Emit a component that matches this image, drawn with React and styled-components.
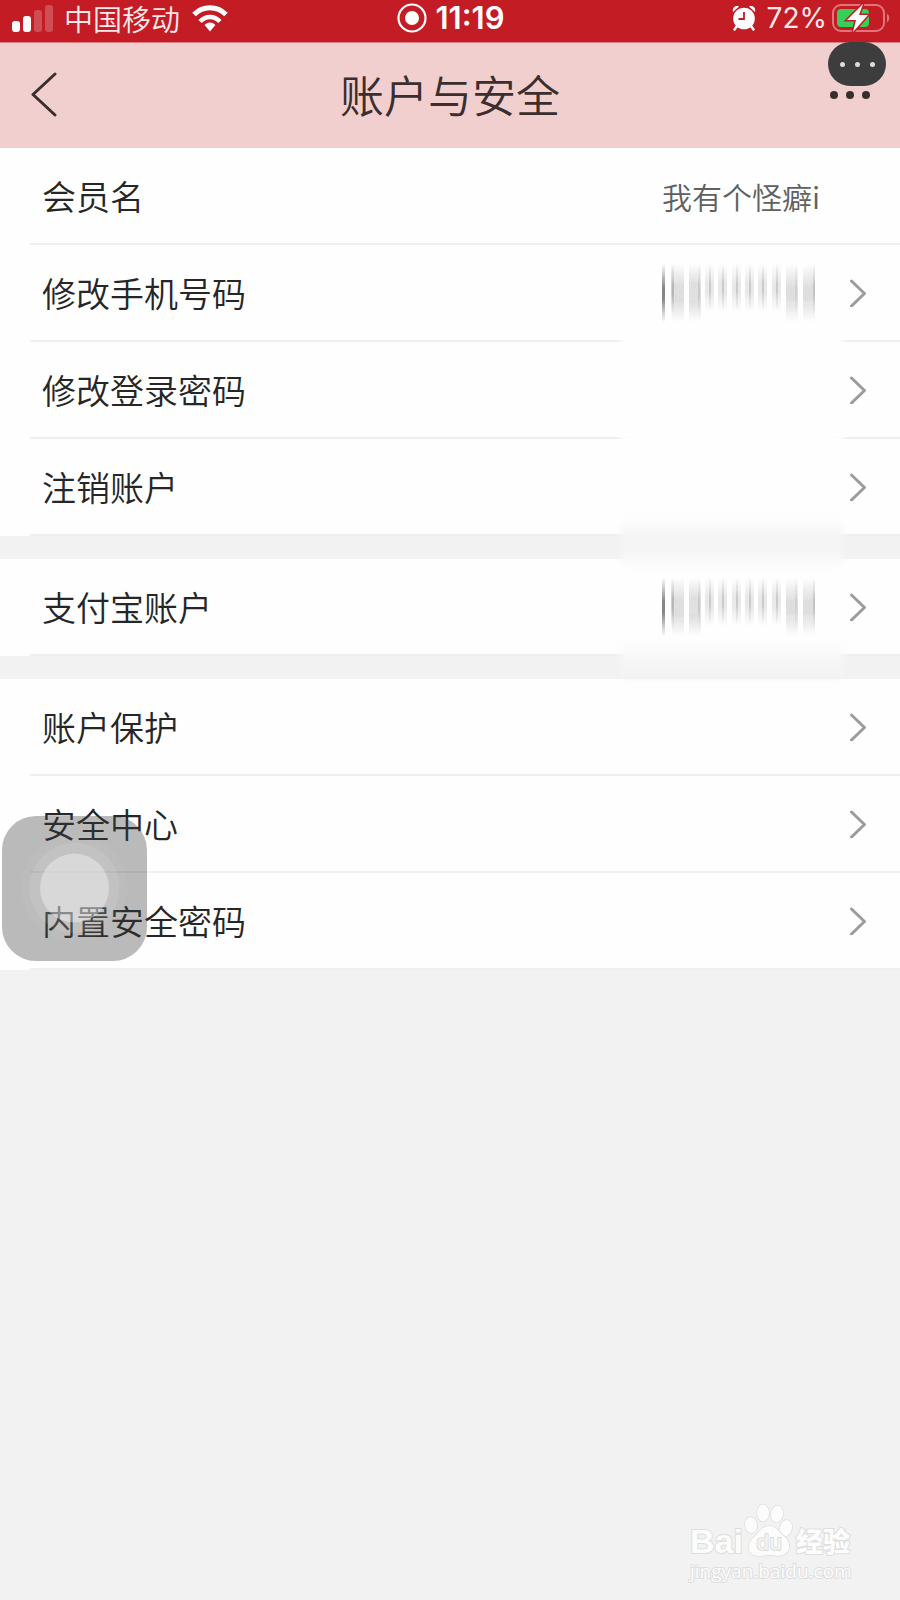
import React from "react";
import styled, { createGlobalStyle } from "styled-components";

const GlobalStyle = createGlobalStyle`
  * {
    box-sizing: border-box;
  }
  body {
    margin: 0;
    background: #f2f2f2;
    font-family: "Noto Sans CJK SC", sans-serif;
    color: #262626;
  }
`;

const Page = styled.div`
  position: relative;
  min-height: 100vh;
  overflow: hidden;
`;

const StatusBar = styled.div`
  display: grid;
  grid-template-columns: 1fr auto 1fr;
  align-items: center;
  height: 43px;
  padding: 0 10px 6px 12px;
  background: #c41c24;
  border-bottom: 1px solid #de7f86;
  color: #fbe9ea;
  font-size: 28px;
  line-height: 36px;
`;

const StatusGroup = styled.div`
  display: flex;
  align-items: center;
  justify-content: ${(props) => props.$align || "flex-start"};
  gap: ${(props) => props.$gap}px;

  svg {
    flex: none;
  }
`;

const Carrier = styled.span`
  font-size: 29px;
  font-weight: 350;
`;

const Time = styled.time`
  color: #fff;
  font-family: Inter, sans-serif;
  font-size: 31px;
  font-weight: 600;
`;

const Percent = styled.span`
  font-family: Inter, sans-serif;
`;

const Header = styled.header`
  display: grid;
  grid-template-columns: 60px 1fr 60px;
  align-items: center;
  height: 105px;
  padding: 0 20px 3px;
  background: #f2cfcf;
`;

const IconButton = styled.button`
  display: flex;
  align-items: center;
  justify-content: ${(props) => props.$align || "flex-start"};
  height: 60px;
  padding: 0 8px;
  border: 0;
  background: none;
`;

const Title = styled.h1`
  margin: 0;
  color: #3a2e2e;
  font-size: 44px;
  font-weight: 350;
  line-height: 60px;
  text-align: center;
`;

const MorePill = styled.button`
  position: absolute;
  top: 42px;
  right: 14px;
  display: flex;
  align-items: center;
  justify-content: center;
  gap: 10px;
  width: 58px;
  height: 44px;
  padding: 0;
  border: 0;
  border-radius: 22px;
  background: #3d3d3d;
`;

const PillDot = styled.span`
  width: 5px;
  height: 5px;
  border-radius: 50%;
  background: #ddd;
`;

const List = styled.ul`
  margin: 0 0 23px;
  padding: 0;
  background: #fefefe;
  list-style: none;
`;

const Item = styled.li`
  position: relative;
  padding-left: 30px;
`;

const Row = styled.a`
  display: flex;
  align-items: center;
  min-height: 97px;
  padding: 0 32px 0 12px;
  border-bottom: 2px solid #efefef;
  color: inherit;
  text-decoration: none;
`;

const Label = styled.span`
  flex: 1;
  font-size: 34px;
  font-weight: 350;
  line-height: 48px;
`;

const Value = styled.span`
  margin-right: 48px;
  color: #606060;
  font-size: 30px;
  font-weight: 350;
  line-height: 40px;
`;

const Masked = styled.svg`
  margin-right: 30px;
`;

// soft patch that hides the line under a masked row
const Smear = styled.span`
  position: absolute;
  z-index: 1;
  right: 57px;
  bottom: ${(props) => (props.$tall ? -34 : -6)}px;
  width: 222px;
  height: ${(props) => (props.$tall ? 54 : 12)}px;
  background: ${(props) =>
    props.$tall
      ? "linear-gradient(#fefefe, #f5f5f5 40%, #f5f5f5 62%, #fefefe)"
      : "#fefefe"};
  filter: blur(3px);
`;

const LastSmear = styled(Smear)`
  bottom: -22px;
  height: 40px;
  background: linear-gradient(#fefefe, #f3f3f3 90%);
`;

const AssistiveTouch = styled.button`
  position: absolute;
  z-index: 2;
  top: 816px;
  left: 2px;
  width: 145px;
  height: 145px;
  padding: 0;
  border: 0;
  border-radius: 34px;
  background: rgba(60, 60, 60, 0.35);
`;

const Watermark = styled.div`
  position: absolute;
  right: 50px;
  bottom: 18px;
  width: 160px;
  color: #fcfcfc;
  -webkit-text-stroke: 2px #dedede;
  paint-order: stroke fill;
`;

const Brand = styled.div`
  display: flex;
  align-items: flex-end;
  justify-content: space-between;
  height: 54px;
  margin-bottom: 2px;
`;

const Bai = styled.span`
  font: bold 34px/34px "Liberation Sans", Arial, sans-serif;
`;

const Jingyan = styled.span`
  font: 900 27px/34px "Noto Sans CJK SC", sans-serif;
`;

const Site = styled.div`
  font: 19px/22px "Open Sans", sans-serif;
`;

const groups = [
  [
    { label: "会员名", value: "我有个怪癖i" },
    { label: "修改手机号码", masked: true, smear: "line" },
    { label: "修改登录密码", smear: "line" },
    { label: "注销账户", smear: "gap" },
  ],
  [{ label: "支付宝账户", masked: true, smear: "last" }],
  [{ label: "账户保护" }, { label: "安全中心" }, { label: "内置安全密码" }],
];

// [x, width, height, opacity] of every smudged digit
const digits = [
  [2, 3, 58, 0.6],
  [11, 3, 50, 0.24],
  [12, 12, 58, 0.15],
  [29, 12, 58, 0.16],
  [38, 2, 50, 0.12],
  [45, 9, 48, 0.09],
  [49, 2, 46, 0.18],
  [58, 9, 48, 0.09],
  [62, 2, 46, 0.18],
  [72, 9, 48, 0.09],
  [76, 2, 46, 0.18],
  [85, 9, 48, 0.09],
  [89, 2, 46, 0.18],
  [98, 9, 48, 0.09],
  [102, 2, 46, 0.18],
  [112, 9, 48, 0.09],
  [116, 2, 46, 0.18],
  [126, 12, 58, 0.14],
  [135, 2, 50, 0.1],
  [143, 12, 58, 0.14],
  [153, 2, 50, 0.18],
];

const MaskedNumber = ({ id }) => (
  <Masked width="160" height="64" viewBox="0 0 160 64" aria-hidden="true">
    <defs>
      <linearGradient id={id} x1="0" y1="0" x2="0" y2="1">
        <stop offset="0" stopColor="#222" stopOpacity="0" />
        <stop offset="0.4" stopColor="#222" stopOpacity="0.9" />
        <stop offset="0.6" stopColor="#222" stopOpacity="0.9" />
        <stop offset="1" stopColor="#222" stopOpacity="0" />
      </linearGradient>
      <filter id={`${id}-soft`} x="-5%" width="110%">
        <feGaussianBlur stdDeviation="0.6 1" />
      </filter>
    </defs>
    <g filter={`url(#${id}-soft)`}>
      {digits.map(([x, width, height, opacity]) => (
        <rect
          key={x}
          x={x}
          y={3}
          width={width}
          height={height}
          opacity={opacity}
          fill={`url(#${id})`}
        />
      ))}
    </g>
  </Masked>
);

const Chevron = () => (
  <svg width="18" height="28" viewBox="0 0 18 28" fill="none">
    <path
      d="M1.5 2L14.500 14.500L1.500 27"
      stroke="#9c9c9c"
      strokeWidth="3"
      strokeLinecap="round"
      strokeLinejoin="round"
    />
  </svg>
);

const SignalIcon = () => (
  <svg width="41" height="27" viewBox="0 0 41 27" fill="#fff">
    <rect x="0" y="16" width="8" height="11" rx="3" />
    <rect x="11" y="11" width="8" height="16" rx="3" />
    <rect x="22" y="5" width="8" height="22" rx="3" opacity="0.22" />
    <rect x="33" y="0" width="8" height="27" rx="3" opacity="0.22" />
  </svg>
);

const WifiIcon = () => (
  <svg width="36" height="27" viewBox="0 0 36 27" fill="none" stroke="#fff">
    <path d="M2 9.5C11 0.5 25 0.5 34 9.5" strokeWidth="5" />
    <path d="M8 16.5C14 10.5 22 10.5 28 16.5" strokeWidth="4.5" />
    <path
      d="M18 17.5C15.8 17.5 14 18.5 12.6 20L18 26.5L23.4 20C22 18.5 20.2 17.5 18 17.5Z"
      fill="#fff"
      stroke="none"
    />
  </svg>
);

const RecordIcon = () => (
  <svg width="30" height="30" viewBox="0 0 30 30">
    <circle cx="15" cy="15" r="13.5" fill="none" stroke="#fff" strokeWidth="2.2" />
    <circle cx="15" cy="15" r="7" fill="#fff" />
  </svg>
);

const AlarmIcon = () => (
  <svg width="24" height="26" viewBox="0 0 24 26">
    <path d="M1 7C0 3 3 0 7 1.5Z" fill="#fff" />
    <path d="M23 7C24 3 21 0 17 1.5Z" fill="#fff" />
    <path
      d="M5 21L2.5 24.5M19 21L21.5 24.5"
      stroke="#fff"
      strokeWidth="2.5"
      strokeLinecap="round"
    />
    <circle cx="12" cy="13.5" r="10.8" fill="#fff" />
    <path d="M12 7V14H6.5" fill="none" stroke="#c41c24" strokeWidth="1.8" />
  </svg>
);

const BatteryIcon = () => (
  <svg width="58" height="30" viewBox="0 0 58 30">
    <rect
      x="1"
      y="2"
      width="51"
      height="26"
      rx="8"
      fill="none"
      stroke="#e0767c"
      strokeWidth="2"
    />
    <path d="M55 10.5C58 12.5 58 17.5 55 19.5Z" fill="#e0767c" />
    <rect x="5" y="6" width="32" height="18" rx="4" fill="#35d058" />
    <path
      d="M31 1L15 17H24L21 29L36 12H27Z"
      fill="#fff"
      stroke="#c41c24"
      strokeWidth="3"
      paintOrder="stroke"
    />
  </svg>
);

const BackIcon = () => (
  <svg width="30" height="46" viewBox="0 0 30 46" fill="none">
    <path
      d="M27 3L5 23.5L27 44"
      stroke="#3a2e2e"
      strokeWidth="3"
      strokeLinecap="round"
      strokeLinejoin="round"
    />
  </svg>
);

const DotsIcon = () => (
  <svg width="43" height="10" viewBox="0 0 43 10" fill="#3a2e2e">
    <circle cx="5" cy="6" r="4" />
    <circle cx="21" cy="6" r="4" />
    <circle cx="37" cy="6" r="4" />
  </svg>
);

const TouchRings = () => (
  <svg width="145" height="145" viewBox="0 0 145 145" fill="#fff">
    <circle cx="72.5" cy="72" r="53" opacity="0.04" />
    <circle cx="72.5" cy="72" r="45" opacity="0.1" />
    <circle cx="72.5" cy="72" r="34.5" opacity="0.36" />
  </svg>
);

const Paw = () => (
  <svg width="48" height="54" viewBox="0 0 48 54" overflow="visible">
    <g fill="#fcfcfc" stroke="#dedede" strokeWidth="1.5">
      <ellipse cx="6" cy="21" rx="6" ry="8" transform="rotate(-8 6 21)" />
      <ellipse cx="18" cy="9" rx="6" ry="8.5" />
      <ellipse cx="32" cy="10" rx="6" ry="8.5" transform="rotate(10 32 10)" />
      <ellipse cx="41" cy="24" rx="6" ry="8" transform="rotate(12 41 24)" />
      <path d="M24 22C31 22 34 28 39 32C44 37 46 43 42 48C37 54 31 51 24 51C17 51 11 54 6 49C2 44 4 37 9 33C15 28 17 22 24 22Z" />
    </g>
    <text
      x="24"
      y="46"
      textAnchor="middle"
      fontFamily="Inter, sans-serif"
      fontSize="21"
      fontWeight="500"
      fill="#f4f4f4"
      stroke="#d6d6d6"
      strokeWidth="1.5"
      paintOrder="stroke"
    >
      du
    </text>
  </svg>
);

const App = () => {
  return (
    <>
      <GlobalStyle />
      <Page>
        <StatusBar>
          <StatusGroup $gap={11}>
            <SignalIcon />
            <StatusGroup $gap={12}>
              <Carrier>中国移动</Carrier>
              <WifiIcon />
            </StatusGroup>
          </StatusGroup>
          <StatusGroup $gap={8}>
            <RecordIcon />
            <Time>11:19</Time>
          </StatusGroup>
          <StatusGroup $gap={11} $align="flex-end">
            <AlarmIcon />
            <StatusGroup $gap={5}>
              <Percent>72%</Percent>
              <BatteryIcon />
            </StatusGroup>
          </StatusGroup>
        </StatusBar>

        <Header>
          <IconButton type="button" aria-label="返回">
            <BackIcon />
          </IconButton>
          <Title>账户与安全</Title>
          <IconButton type="button" aria-label="更多" $align="flex-end">
            <DotsIcon />
          </IconButton>
        </Header>
        <MorePill type="button" aria-label="菜单">
          <PillDot />
          <PillDot />
          <PillDot />
        </MorePill>

        <main>
          {groups.map((items, index) => (
            <List key={index}>
              {items.map((item) => (
                <Item key={item.label}>
                  <Row
                    as={item.value ? "div" : "a"}
                    href={item.value ? undefined : "#"}
                  >
                    <Label>{item.label}</Label>
                    {item.value && <Value>{item.value}</Value>}
                    {item.masked && <MaskedNumber id={`mask-${index}`} />}
                    {!item.value && <Chevron />}
                  </Row>
                  {item.smear === "line" && <Smear />}
                  {item.smear === "gap" && <Smear $tall />}
                  {item.smear === "last" && <LastSmear />}
                </Item>
              ))}
            </List>
          ))}
        </main>

        <AssistiveTouch type="button" aria-label="辅助触控">
          <TouchRings />
        </AssistiveTouch>

        <Watermark>
          <Brand>
            <Bai>Bai</Bai>
            <Paw />
            <Jingyan>经验</Jingyan>
          </Brand>
          <Site>jingyan.baidu.com</Site>
        </Watermark>
      </Page>
    </>
  );
};

export default App;
